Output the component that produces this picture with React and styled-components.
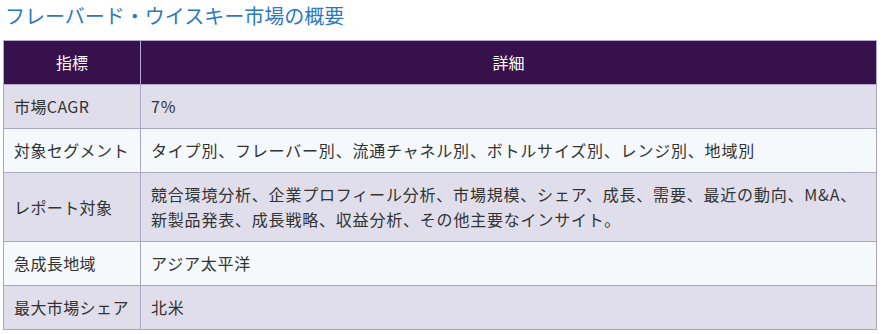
import React from 'react';
import styled, { createGlobalStyle } from 'styled-components';

const GlobalStyle = createGlobalStyle`
  body {
    margin: 0;
    background: #ffffff;
    font-family: "Noto Sans CJK JP", "Noto Sans", sans-serif;
  }
`;

const Page = styled.div`
  padding: 0 3px;
`;

const Title = styled.h2`
  margin: 2px 0 11px 2px;
  font-size: 20px;
  line-height: 27px;
  font-weight: 400;
  color: #2e79bd;
`;

const Table = styled.table`
  width: 874px;
  border-collapse: collapse;
  table-layout: fixed;
  font-size: 16px;
  line-height: 25px;
`;

const HeadCell = styled.th`
  background: #37114b;
  color: #ffffff;
  font-weight: 400;
  text-align: center;
  padding: 9px 10px;
  border: 1px solid #b4a6cf;
  width: ${(p) => p.$width || 'auto'};
`;

const Row = styled.tr`
  background: ${(p) => (p.$alt ? '#f5f9fc' : '#e0deeb')};
`;

const Cell = styled.td`
  color: #333333;
  padding: 9px ${(p) => (p.$label ? '4px' : '10px')} 9px 10px;
  border: 1px solid #aaa7c4;
  vertical-align: middle;
  white-space: nowrap;
  letter-spacing: ${(p) => (p.$label ? '0.4px' : '0.8px')};
`;

const rows = [
  ['市場CAGR', ['7%']],
  ['対象セグメント', ['タイプ別、フレーバー別、流通チャネル別、ボトルサイズ別、レンジ別、地域別']],
  [
    'レポート対象',
    [
      '競合環境分析、企業プロフィール分析、市場規模、シェア、成長、需要、最近の動向、M&A、',
      '新製品発表、成長戦略、収益分析、その他主要なインサイト。',
    ],
  ],
  ['急成長地域', ['アジア太平洋']],
  ['最大市場シェア', ['北米']],
];

export default function App() {
  return (
    <Page>
      <GlobalStyle />
      <Title>フレーバード・ウイスキー市場の概要</Title>
      <Table>
        <thead>
          <tr>
            <HeadCell $width="116px">指標</HeadCell>
            <HeadCell>詳細</HeadCell>
          </tr>
        </thead>
        <tbody>
          {rows.map(([label, lines], i) => (
            <Row key={label} $alt={i % 2 === 1}>
              <Cell $label>{label}</Cell>
              <Cell>
                {lines.map((line, j) => (
                  <React.Fragment key={j}>
                    {j > 0 && <br />}
                    {line}
                  </React.Fragment>
                ))}
              </Cell>
            </Row>
          ))}
        </tbody>
      </Table>
    </Page>
  );
}
